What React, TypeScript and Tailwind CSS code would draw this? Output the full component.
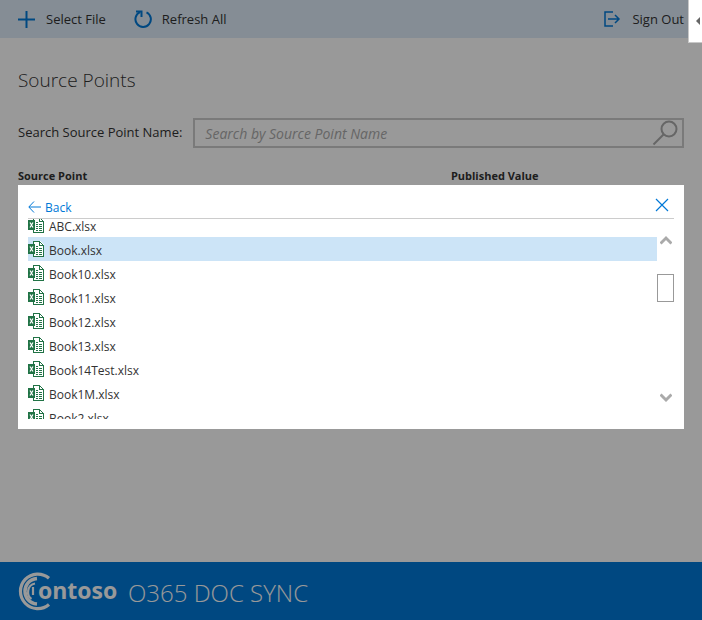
import { useLayoutEffect, useRef, useState } from "react";

const FILES = [
  "ABC.xlsx",
  "Book.xlsx",
  "Book10.xlsx",
  "Book11.xlsx",
  "Book12.xlsx",
  "Book13.xlsx",
  "Book14Test.xlsx",
  "Book1M.xlsx",
  "Book2.xlsx",
];

function ExcelIcon() {
  return (
    <svg width="16" height="16" viewBox="0 0 16 16" shapeRendering="crispEdges" className="shrink-0" aria-hidden="true">
      <path d="M5 0h7l4 4v12H5z" fill="#fff" />
      <path d="M5 0h7v1H5zM5 0h1v3H5zM5 13h1v3H5zM5 15h11v1H5zM15 4h1v12h-1zM11 0h1v5h-1zM11 4h5v1h-5zM12 1h1v1h-1zM13 2h1v1h-1zM14 3h1v1h-1z" fill="#217346" />
      <path d="M8 5h2v1H8zM8 7h2v1H8zM11 7h3v1h-3zM8 9h2v1H8zM11 9h3v1h-3zM8 11h2v1H8zM11 11h3v1h-3zM8 13h2v1H8zM11 13h3v1h-3z" fill="#217346" />
      <path d="M0 3h7v10H0z" fill="#217346" />
      <path d="M2 5.500l3 5M5 5.500l-3 5" stroke="#fff" strokeWidth="1.2" shapeRendering="auto" />
    </svg>
  );
}

function ContosoLogo() {
  return (
    <svg width="100" height="40" viewBox="0 0 100 40" role="img" aria-label="Contoso">
      <g fill="none" stroke="#fff">
        <path d="M31 7.200A17.300 17.300 0 1 0 31 33.500" strokeWidth="3.200" />
        <path d="M19 7.500C3 9 3 31.500 19 33" strokeWidth="3.500" />
        <path d="M17 12.500C8.500 14 8.500 25 13.500 28" strokeWidth="2.200" />
        <path d="M15 16v8" strokeWidth="2.200" />
      </g>
      <text x="20" y="28" fill="#fff" fontSize="23" fontWeight="700" fontFamily="'Open Sans', sans-serif">
        ontoso
      </text>
    </svg>
  );
}

export default function App() {
  const [selected, setSelected] = useState("Book.xlsx");
  const listRef = useRef<HTMLUListElement>(null);

  useLayoutEffect(() => {
    if (listRef.current) listRef.current.scrollTop = 6;
  }, []);

  const scrollBy = (amount: number) => listRef.current?.scrollBy({ top: amount });

  return (
    <div className="flex min-h-screen flex-col bg-white font-['Open_Sans','Noto_Sans',sans-serif] text-[13px] text-[#333]">
      <header className="flex h-[38px] items-center bg-[#deecf9] px-[18px]">
        <button className="flex items-center gap-[11px]">
          <svg width="17" height="17" viewBox="0 0 17 17" fill="none" stroke="#0078d7" strokeWidth="2" aria-hidden="true">
            <path d="M8.500 0v17M0 8.500h17" />
          </svg>
          <span className="pt-px">Select File</span>
        </button>
        <button className="ml-[28px] flex items-center gap-[10px]">
          <svg width="18" height="18" viewBox="0 0 18 18" fill="none" stroke="#0078d7" strokeWidth="2" aria-hidden="true">
            <path d="M12.500 2.300A7.700 7.700 0 1 1 6 2.200" />
            <path d="M2 1.500h5.500V7" />
          </svg>
          <span className="pt-px">Refresh All</span>
        </button>
        <button className="ml-auto flex items-center gap-[11px]">
          <svg width="17" height="16" viewBox="0 0 17 16" fill="none" stroke="#0078d7" strokeWidth="1.500" aria-hidden="true">
            <path d="M9 1H1v14h8M4 8h11M11 4l4 4-4 4" />
          </svg>
          <span className="pt-px">Sign Out</span>
        </button>
      </header>

      <main className="flex-1 px-[18px] pt-[26px]">
        <h1 className="text-[19px] leading-[32px] font-light">Source Points</h1>
        <div className="mt-[22px] flex items-center gap-[11px]">
          <label htmlFor="search">Search Source Point Name:</label>
          <div className="flex h-[30px] flex-1 items-center border-2 border-[#ccc] pr-1 pl-[10px]">
            <input
              id="search"
              placeholder="Search by Source Point Name"
              className="min-w-0 flex-1 bg-transparent text-[14px] italic outline-none placeholder:text-[#aaa]"
            />
            <svg width="26" height="26" viewBox="0 0 26 26" fill="none" stroke="#aaa" strokeWidth="2" aria-hidden="true">
              <circle cx="17" cy="9" r="7.500" />
              <path d="M11.500 14.500L1.500 24.500" />
            </svg>
          </div>
        </div>
        <table className="mt-[20px] w-full table-fixed text-left text-[11px] leading-[16px]">
          <thead>
            <tr>
              <th className="w-[65%] font-bold">Source Point</th>
              <th className="font-bold">Published Value</th>
            </tr>
          </thead>
        </table>
      </main>

      <footer className="flex h-[58px] items-center gap-[10px] bg-[#0078d7] px-[18px] text-white">
        <ContosoLogo />
        <span className="pt-1 text-[24px] font-light">O365 DOC SYNC</span>
      </footer>

      <div className="fixed inset-0 bg-black/40 px-[18px] pt-[185px]">
        <section role="dialog" aria-label="Select file" className="bg-white p-[10px]">
          <div className="flex h-[24px] items-center justify-between border-b border-[#ccc] text-[#0078d7]">
            <button className="flex items-center gap-1 text-[12px]">
              <svg width="13" height="12" viewBox="0 0 13 12" fill="none" stroke="#0078d7" aria-hidden="true">
                <path d="M6 .5L.8 6 6 11.500M1 6h12" />
              </svg>
              <span className="pt-[2px]">Back</span>
            </button>
            <button aria-label="Close" className="mr-[5px] mb-[4px]">
              <svg width="14" height="14" viewBox="0 0 14 14" fill="none" stroke="#0078d7" strokeWidth="1.200" aria-hidden="true">
                <path d="M1 1l12 12M13 1L1 13" />
              </svg>
            </button>
          </div>
          <div className="flex h-[200px]">
            <ul ref={listRef} className="flex-1 overflow-hidden">
              {FILES.map((file) => (
                <li key={file}>
                  <button
                    onClick={() => setSelected(file)}
                    className={`flex h-[24px] w-full items-center gap-[5px] text-left text-[12px] ${file === selected ? "bg-[#cce4f7]" : ""}`}
                  >
                    <ExcelIcon />
                    <span className="pt-[3px]">{file}</span>
                  </button>
                </li>
              ))}
            </ul>
            <div className="flex w-[17px] flex-col items-center py-[16px]">
              <button aria-label="Scroll up" onClick={() => scrollBy(-24)}>
                <svg width="12" height="11" viewBox="0 0 12 11" fill="none" stroke="#aaa" strokeWidth="3" className="block" aria-hidden="true">
                  <path d="M.5 8.500L6 3l5.500 5.500" />
                </svg>
              </button>
              <div className="mt-[28px] h-[28px] w-full border border-[#999] bg-white" />
              <button aria-label="Scroll down" onClick={() => scrollBy(24)} className="mt-auto">
                <svg width="12" height="11" viewBox="0 0 12 11" fill="none" stroke="#aaa" strokeWidth="3" className="block" aria-hidden="true">
                  <path d="M.5 2.500L6 8l5.500-5.500" />
                </svg>
              </button>
            </div>
          </div>
        </section>
      </div>

      <button aria-label="Open panel" className="fixed top-0 right-0 flex h-[43px] w-[14px] items-center justify-end border-b border-l border-[#c8c8c8] bg-white pr-[2px]">
        <svg width="4" height="8" viewBox="0 0 4 8" fill="#666" aria-hidden="true">
          <path d="M4 0v8L0 4z" />
        </svg>
      </button>
    </div>
  );
}
